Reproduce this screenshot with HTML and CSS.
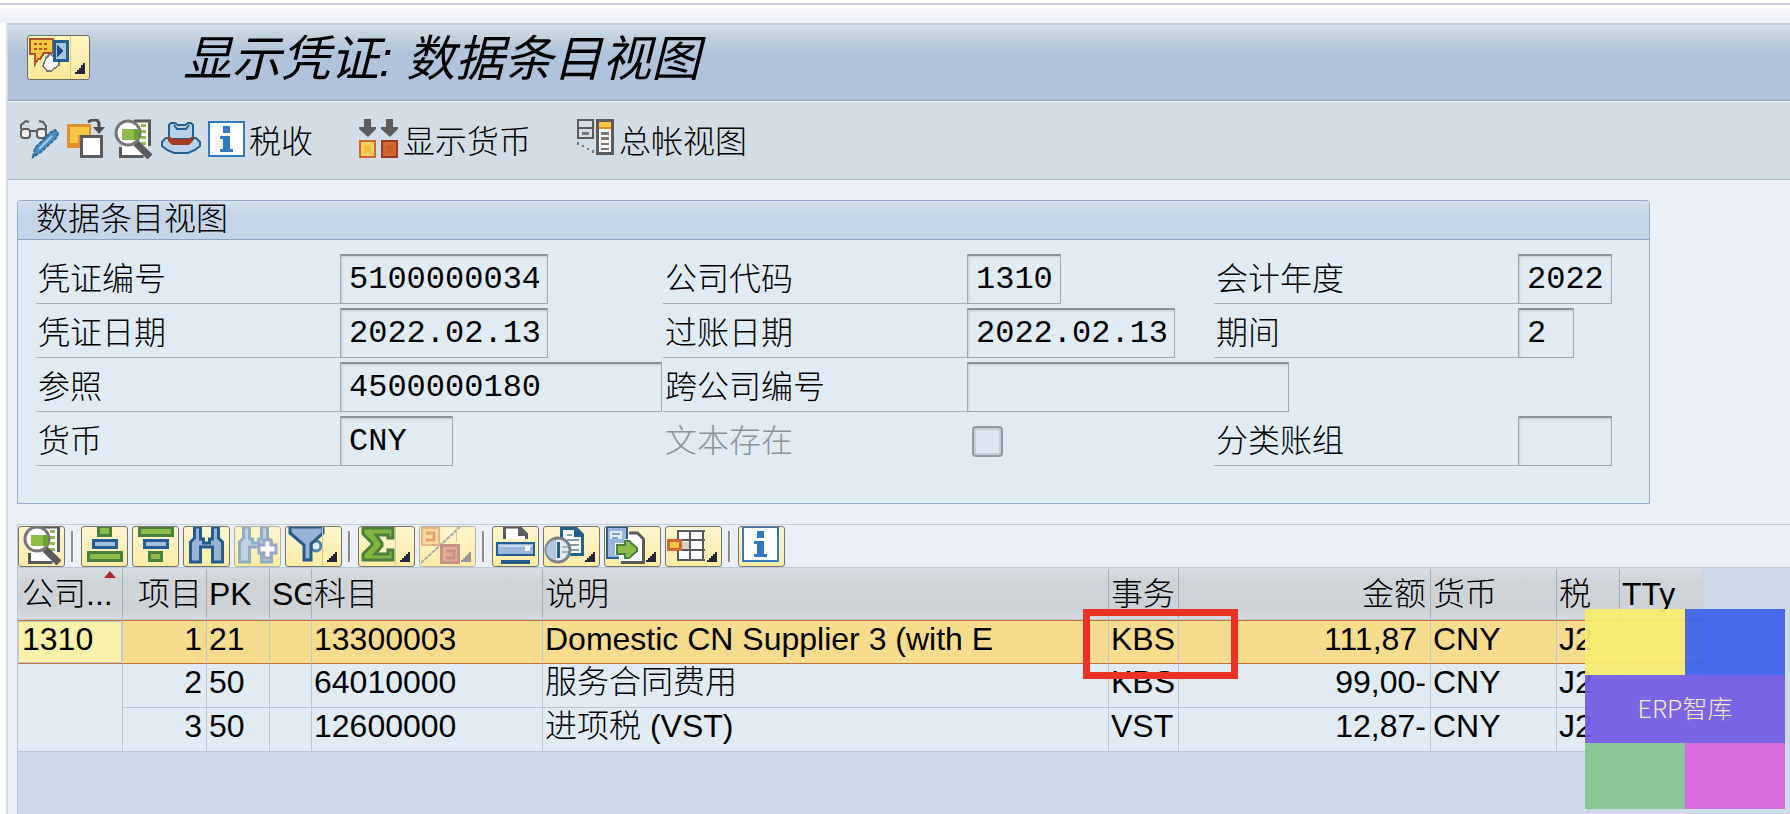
FILE: index.html
```html
<!DOCTYPE html>
<html lang="zh-CN">
<head>
    <meta charset="UTF-8">
    <meta name="viewport" content="width=device-width, initial-scale=1.0">
    <title>显示凭证: 数据条目视图</title>
    <link rel="stylesheet" href="styles.css">
</head>
<body>
    <!-- shared icons -->
    <svg class="defs" width="0" height="0">
        <symbol id="i-detail" viewBox="0 0 38 40">
            <path fill="#fff" stroke="#5a5a5a" stroke-width="3" d="M20 2h15.500v25M6.500 28v9.500h23"/>
            <path fill="#fff" d="M8 4h26v32H8z"/>
            <path fill="#8fbc45" d="M27 5h5v3h-5zM27 11h5v3h-5zM27 17h5v3h-5zM27 23h5v3h-5z"/>
            <path stroke="#5a5a5a" stroke-width="7" d="M22 24L36 38"/>
            <circle cx="14" cy="14" r="12" fill="#fff" stroke="#777" stroke-width="3"/>
            <path fill="#8fbc45" d="M8 10h17v11H8z"/>
            <path fill="#6da036" d="M20 10h5v11h-5z"/>
        </symbol>
        <symbol id="i-info" viewBox="0 0 37 36">
            <path fill="#fff" stroke="#3279bd" stroke-width="2" d="M1 1h35v34H1z"/>
            <path fill="#3279bd" d="M15 5h7v7h-7zM12 15h10v13h3v3H12v-3h3V18h-3z"/>
        </symbol>
    </svg>

    <div class="top-strip"></div>
    <div class="window">
        <header class="title-bar">
            <button type="button" class="btn-services" aria-label="服务">
                <svg viewBox="1 1 61 43" width="61" height="43" shape-rendering="crispEdges">
                    <path fill="#fff" stroke="#777" stroke-width="1.500" d="M19 23l4-4 9 7v4l-8 6h-4l-4-5z"/>
                    <path fill="#f6c944" stroke="#b9502a" stroke-width="2" d="M3 4h23v14h-9l-4 6h-2l-3 5V19H3z"/>
                    <path stroke="#b9502a" stroke-width="2" stroke-dasharray="3 2" d="M7 9h14M7 14h14"/>
                    <path fill="#a9c3df" stroke="#245f92" stroke-width="3" d="M27 6h13v19H27z"/>
                    <path fill="#174f80" d="M30 10l7 6-7 6z"/>
                    <path fill="#d8cb8c" d="M43 1h1v43h-1z"/>
                    <path fill="#26253a" d="M58 28v11H48v-2h2v-2h2v-2h2v-3h2v-2z"/>
                </svg>
            </button>
            <h1>显示凭证: 数据条目视图</h1>
        </header>

        <nav class="app-bar">
            <button type="button" class="tool" aria-label="显示/更改">
                <svg viewBox="0 0 40 40" width="40" height="40">
                    <g fill="none" stroke="#5c5c5c" stroke-width="2">
                        <path d="M1 10V6l5-4 3 1M19 2l4 1 3 4v4"/>
                        <rect x="1" y="10" width="9" height="9" rx="3" fill="#f4f4f4"/>
                        <rect x="17" y="10" width="9" height="9" rx="3" fill="#f4f4f4"/>
                        <path d="M10 12h7"/>
                    </g>
                    <path fill="#4f8fbf" stroke="#2c6a9c" stroke-width="2" stroke-dasharray="4 1" d="M13 38l2-9 16-16 4-2 3 3-1 4-16 15z"/>
                    <path stroke="#a7c6df" stroke-width="2" d="M19 30l13-13"/>
                </svg>
            </button>
            <button type="button" class="tool" aria-label="其他凭证">
                <svg viewBox="0 0 40 40" width="40" height="40">
                    <path fill="#e38e2c" d="M0 5h24v24H0z"/>
                    <path fill="#f6c944" d="M3 8h19v8H11v8H3z"/>
                    <path fill="#fff" stroke="#5c5c5c" stroke-width="3" d="M14.500 17.500h20v20h-20z"/>
                    <path fill="none" stroke="#4d4d4d" stroke-width="3" d="M21 3l4-2h5l2 3v7"/>
                    <path fill="#4d4d4d" d="M26 8h12l-6 7z"/>
                </svg>
            </button>
            <button type="button" class="tool" aria-label="明细">
                <svg width="38" height="40"><use href="#i-detail"/></svg>
            </button>
            <button type="button" class="tool" aria-label="凭证抬头">
                <svg viewBox="0 0 40 40" width="40" height="40">
                    <path fill="#b9d0e8" stroke="#245f92" stroke-width="2" d="M8 19H5l-4 4v4l5 4 7 3h14l7-3 5-4v-4l-4-4z"/>
                    <path fill="#b9d0e8" stroke="#245f92" stroke-width="2" d="M8 20V6l2-2h4l3 2h7l3-2h3l2 2v14z"/>
                    <path fill="none" stroke="#245f92" stroke-width="2" d="M13 6l3 4h9l3-4"/>
                    <path fill="#a43a20" d="M7 17l6 3h14l5-3v5l-4 4H11l-4-4z"/>
                </svg>
            </button>
            <button type="button" class="tool wide">
                <svg width="37" height="36"><use href="#i-info"/></svg>
                <span>税收</span>
            </button>
            <button type="button" class="tool wide">
                <svg viewBox="0 0 40 40" width="40" height="40">
                    <path fill="#5c5c5c" d="M5 0h7v8h5v2l-8 8-9-8V8h5zM27 0h7v8h5v2l-8 8-9-8V8h5z"/>
                    <path fill="#f8d162" stroke="#d3692e" stroke-width="2" d="M1 22h15v16H1z"/>
                    <path fill="#f3c23a" d="M5 26h7v8H5z"/>
                    <path fill="#cf6a38" stroke="#a23720" stroke-width="2" d="M23 22h15v16H23z"/>
                    <path fill="#d25a24" d="M27 26h7v8h-7z"/>
                </svg>
                <span>显示货币</span>
            </button>
            <button type="button" class="tool wide">
                <svg viewBox="0 0 38 40" width="38" height="40" shape-rendering="crispEdges">
                    <path fill="#d8dde4" stroke="#5c5c5c" stroke-width="2" d="M1 1h15v18H1zM1 9h15"/>
                    <path fill="#777" d="M5 13h7v3H5zM0 23h2v3H0zM5 26h2v2H5zM10 29h2v2h-2zM15 31h2v3h-2z"/>
                    <path fill="#fff" stroke="#5c5c5c" stroke-width="3" d="M20.500 1.500h15v33h-15z"/>
                    <path fill="#f6c944" d="M22 3h12v5H22z"/>
                    <path fill="#e38e2c" d="M22 8h12v2H22z"/>
                    <path fill="#777" d="M24 13h8v3h-8zM24 18h8v3h-8zM24 24h8v2h-8zM24 29h8v2h-8z"/>
                </svg>
                <span>总帐视图</span>
            </button>
        </nav>

        <main class="content">
            <section class="panel">
                <h2>数据条目视图</h2>
                <form class="fields">
                    <div class="field">
                        <label for="docNo">凭证编号</label>
                        <input type="text" id="docNo" class="w10" value="5100000034" readonly>
                    </div>
                    <div class="field">
                        <label for="company">公司代码</label>
                        <input type="text" id="company" class="w4" value="1310" readonly>
                    </div>
                    <div class="field">
                        <label for="year">会计年度</label>
                        <input type="text" id="year" class="w4" value="2022" readonly>
                    </div>

                    <div class="field">
                        <label for="docDate">凭证日期</label>
                        <input type="text" id="docDate" class="w10" value="2022.02.13" readonly>
                    </div>
                    <div class="field">
                        <label for="postDate">过账日期</label>
                        <input type="text" id="postDate" class="w10" value="2022.02.13" readonly>
                    </div>
                    <div class="field">
                        <label for="period">期间</label>
                        <input type="text" id="period" class="w2" value="2" readonly>
                    </div>

                    <div class="field">
                        <label for="reference">参照</label>
                        <input type="text" id="reference" class="w16" value="4500000180" readonly>
                    </div>
                    <div class="field field-last">
                        <label for="crossNo">跨公司编号</label>
                        <input type="text" id="crossNo" class="w16" value="" readonly>
                    </div>

                    <div class="field">
                        <label for="currency">货币</label>
                        <input type="text" id="currency" class="w5" value="CNY" readonly>
                    </div>
                    <div class="field disabled">
                        <label for="texts">文本存在</label>
                        <input type="checkbox" id="texts" disabled>
                    </div>
                    <div class="field">
                        <label for="ledger">分类账组</label>
                        <input type="text" id="ledger" class="w4" value="" readonly>
                    </div>
                </form>
            </section>

            <section class="alv">
                <div class="alv-bar">
                    <button type="button" aria-label="明细">
                        <svg viewBox="1 1 45 39" width="45" height="39"><use href="#i-detail" x="5" y="-1" width="38" height="40"/></svg>
                    </button>
                    <span class="sep"></span>
                    <button type="button" aria-label="升序排序">
                        <svg viewBox="1 1 45 39" width="45" height="39" shape-rendering="crispEdges" stroke-width="3">
                            <path fill="#8fbc49" stroke="#47803f" d="M17.500 0h12v9.500h-12zM7.500 26.500h33v8h-33z"/>
                            <path fill="#a5bedd" stroke="#245f92" d="M12.500 14.500h23v7h-23z"/>
                        </svg>
                    </button>
                    <button type="button" aria-label="降序排序">
                        <svg viewBox="1 1 45 39" width="45" height="39" shape-rendering="crispEdges" stroke-width="3">
                            <path fill="#8fbc49" stroke="#47803f" d="M7.500 1.500h33v8h-33zM17.500 26.500h12v8h-12z"/>
                            <path fill="#a5bedd" stroke="#245f92" d="M12.500 14.500h23v7h-23z"/>
                        </svg>
                    </button>
                    <button type="button" aria-label="查找">
                        <svg viewBox="1 1 45 39" width="45" height="39">
                            <path fill="#97b3d6" stroke="#245b8c" stroke-width="3" d="M7.500 36V16l4-4V1h6v12h3v4h6v-4h3V1h6v11l4 4v20h-10V21h-12v15z"/>
                        </svg>
                    </button>
                    <button type="button" class="off" aria-label="继续查找" disabled>
                        <svg viewBox="1 1 45 39" width="45" height="39">
                            <path fill="#c3d0e0" stroke="#8fadc4" stroke-width="3" d="M5.500 36V16l4-4V1h6v12h3v4h6v-4h3V1h6v11l4 4v20h-10V21h-12v15z"/>
                            <path fill="#fff" stroke="#98a5c8" stroke-width="3" d="M30 14h7v5h5v8h-5v5h-7v-5h-5v-8h5z"/>
                        </svg>
                    </button>
                    <button type="button" aria-label="过滤器">
                        <svg viewBox="1 1 55 39" width="55" height="39">
                            <circle cx="31" cy="20" r="5" fill="#dfe8f0" stroke="#4d81b0" stroke-width="3"/>
                            <path fill="#97b3d6" stroke="#245b8c" stroke-width="3" d="M5 1h33v6L26 18v16h-7V19L5 7z"/>
                            <path class="split" d="M37 1h1v39h-1z"/>
                            <path class="corner" d="M52 26v10H42v-2h2v-2h2v-2h2v-2h2v-2z"/>
                        </svg>
                    </button>
                    <span class="sep"></span>
                    <button type="button" aria-label="总计">
                        <svg viewBox="1 1 55 39" width="55" height="39">
                            <path fill="#86b440" stroke="#47803f" stroke-width="3" d="M5 2h30v10h-5V9H18l6 8v3l-7 8h13v-4h5v10H5v-6l9-9v-2L5 8z"/>
                            <path class="split" d="M37 1h1v39h-1z"/>
                            <path class="corner" d="M52 26v10H42v-2h2v-2h2v-2h2v-2h2v-2z"/>
                        </svg>
                    </button>
                    <button type="button" class="off" aria-label="小计" disabled>
                        <svg viewBox="1 1 55 39" width="55" height="39">
                            <path fill="#f6dc9c" stroke="#e8b487" stroke-width="2" d="M3 2h17v17H3z"/>
                            <path fill="none" stroke="#dfa17c" stroke-width="3" d="M7 7h8v7H7"/>
                            <path stroke="#a9a9a9" stroke-width="2" stroke-dasharray="4 1" d="M2 37L41 1"/>
                            <path fill="#dfae93" stroke="#c69285" stroke-width="3" d="M22.500 19.500h17v17h-17z"/>
                            <path fill="none" stroke="#c69285" stroke-width="3" d="M27 25h8v7h-8"/>
                            <path class="split" d="M37 1h1v15h-1z"/>
                            <path class="corner" d="M52 26v10H42v-2h2v-2h2v-2h2v-2h2v-2z"/>
                        </svg>
                    </button>
                    <span class="sep"></span>
                    <button type="button" aria-label="打印">
                        <svg viewBox="1 1 45 39" width="45" height="39">
                            <path fill="#fff" stroke="#5a5a5a" stroke-width="3" d="M12.500 13V1h15l7 7v5"/>
                            <path fill="#5a5a5a" d="M26 1l9 9h-9z"/>
                            <path fill="#9ab6d8" stroke="#245f92" stroke-width="2" d="M5 17h37v12H5z"/>
                            <path fill="#c9daea" d="M7 19h33v2H7z"/>
                            <path fill="#fff" d="M33 20h5v5h-5z"/>
                            <path fill="#245b8c" d="M9 34h29v4H9z"/>
                        </svg>
                    </button>
                    <button type="button" aria-label="视图">
                        <svg viewBox="1 1 55 39" width="55" height="39">
                            <path fill="#fff" stroke="#245f92" stroke-width="3" d="M18.500 2.500h15l6 6v20h-21z"/>
                            <path fill="#245f92" d="M31 1l10 10H31z"/>
                            <path stroke="#7f9fb5" stroke-width="2" d="M24 9h5M24 14h12M24 19h12M24 24h12"/>
                            <circle cx="15" cy="24" r="12" fill="#e4ebef" stroke="#7d8287" stroke-width="3"/>
                            <path fill="#b0c8e0" d="M13 14v20A10 10 0 0 1 13 14z"/>
                            <path fill="#245f92" d="M14 16h3v16h-3z"/>
                            <path stroke="#9fb6c6" stroke-width="2" d="M19 21h6M19 26h6"/>
                            <path class="corner" d="M52 26v10H42v-2h2v-2h2v-2h2v-2h2v-2z"/>
                        </svg>
                    </button>
                    <button type="button" aria-label="导出">
                        <svg viewBox="1 1 55 39" width="55" height="39">
                            <path fill="#fff" stroke="#5a5a5a" stroke-width="3" d="M17 36.500h22.500V13l-6-6H25"/>
                            <path fill="#fff" d="M18 9h15l5 5v21H18z"/>
                            <path fill="#9ab6d8" stroke="#245f92" stroke-width="2" d="M3 1h20v31H3z"/>
                            <path fill="#e3ecf5" d="M6 5h12v8H6z"/>
                            <path stroke="#7fa0c8" stroke-width="2" d="M8 8h8M8 12h6"/>
                            <path fill="#fff" d="M11 17h9v-4l15 0v22H15v-6h-4z"/>
                            <path fill="#8fbc49" stroke="#47803f" stroke-width="2" d="M13 19h8v-4h4l8 7v3l-8 7h-4v-4h-8z"/>
                            <path class="corner" d="M52 26v10H42v-2h2v-2h2v-2h2v-2h2v-2z"/>
                        </svg>
                    </button>
                    <button type="button" aria-label="布局">
                        <svg viewBox="1 1 55 39" width="55" height="39" shape-rendering="crispEdges">
                            <path fill="#fff" d="M12 3h27v31H12z"/>
                            <path fill="none" stroke="#5a5a5a" stroke-width="2" d="M12 5h28M12 14h28M12 24h28M12 34h28M13 4v30M25 4v30M38 4v30"/>
                            <path fill="#d4cfc0" d="M16 16h8v7h-8z"/>
                            <path fill="#f6c944" stroke="#cf6a38" stroke-width="3" d="M3.500 14.500h12v9h-12z"/>
                            <path class="corner" d="M52 26v10H42v-2h2v-2h2v-2h2v-2h2v-2z"/>
                        </svg>
                    </button>
                    <span class="sep"></span>
                    <button type="button" aria-label="信息">
                        <svg viewBox="1 1 45 39" width="45" height="39"><use href="#i-info" x="4" y="0" width="37" height="36"/></svg>
                    </button>
                </div>

                <div class="grid">
                    <table>
                        <colgroup>
                            <col class="c-company"><col class="c-item"><col class="c-pk"><col class="c-sg">
                            <col class="c-account"><col class="c-text"><col class="c-trans"><col class="c-amount">
                            <col class="c-curr"><col class="c-tax"><col class="c-tty">
                        </colgroup>
                        <thead>
                            <tr>
                                <th class="sorted">公司...</th>
                                <th class="num">项目</th>
                                <th>PK</th>
                                <th>SG</th>
                                <th>科目</th>
                                <th>说明</th>
                                <th>事务</th>
                                <th class="num">金额</th>
                                <th>货币</th>
                                <th>税</th>
                                <th>TTy</th>
                            </tr>
                        </thead>
                        <tbody>
                            <tr class="selected">
                                <td class="key">1310</td>
                                <td class="num">1</td>
                                <td>21</td>
                                <td></td>
                                <td>13300003</td>
                                <td>Domestic CN Supplier 3 (with E</td>
                                <td>KBS</td>
                                <td class="num">111,87&nbsp;</td>
                                <td>CNY</td>
                                <td>J2</td>
                                <td></td>
                            </tr>
                            <tr>
                                <td rowspan="2"></td>
                                <td class="num">2</td>
                                <td>50</td>
                                <td></td>
                                <td>64010000</td>
                                <td>服务合同费用</td>
                                <td>KBS</td>
                                <td class="num">99,00-</td>
                                <td>CNY</td>
                                <td>J2</td>
                                <td></td>
                            </tr>
                            <tr>
                                <td class="num">3</td>
                                <td>50</td>
                                <td></td>
                                <td>12600000</td>
                                <td>进项税 (VST)</td>
                                <td>VST</td>
                                <td class="num">12,87-</td>
                                <td>CNY</td>
                                <td>J2</td>
                                <td></td>
                            </tr>
                        </tbody>
                    </table>
                    <div class="marker"></div>
                </div>
            </section>
        </main>
    </div>

    <div class="watermark">
        <i class="yellow"></i><i class="blue"></i>
        <span>ERP智库</span>
        <i class="green"></i><i class="pink"></i>
    </div>
</body>
</html>
```

FILE: styles.css
```css
* {
    box-sizing: border-box;
}
body {
    margin: 0;
    min-height: 100vh;
    display: flex;
    flex-direction: column;
    font-family: "Liberation Sans", "Noto Sans CJK SC", sans-serif;
    font-size: 32px;
    font-weight: 300;
    color: #000;
    background: #fff;
    overflow: hidden;
}
h1, h2 {
    margin: 0;
}
button {
    font: inherit;
    color: inherit;
    padding: 0;
    cursor: pointer;
}
svg {
    display: block;
    fill: none;
    flex: none;
}
.defs {
    position: absolute;
}

/* window frame */
.top-strip {
    height: 20px;
    margin-top: 3px;
    border-top: 2px solid #c9cfdd;
    background: linear-gradient(#fff 3px, #f6f7fb 4px, #eceff5);
}
.window {
    flex: 1;
    display: flex;
    flex-direction: column;
    margin-left: 6px;
    border-left: 2px solid #d6dce8;
    background: #ebf0f8;
}
.title-bar {
    display: flex;
    align-items: flex-start;
    height: 78px;
    padding: 10px 0 0 19px;
    border-top: 2px solid #c3ccd8;
    border-bottom: 1px solid #96a8bf;
    background: linear-gradient(#d5e0ea, #c3d1dc 12px, #b0c3da 28px, #b0c3da);
}
.btn-services {
    width: 63px;
    height: 45px;
    border: 1px solid #6c6c66;
    border-radius: 3px;
    background: linear-gradient(#fdf4c0, #fae99a);
}
.title-bar h1 {
    margin-left: 93px;
    font-size: 49px;
    line-height: 48px;
    font-weight: 400;
    font-style: italic;
    white-space: nowrap;
}
.app-bar {
    display: flex;
    align-items: center;
    height: 79px;
    padding: 0 0 4px 12px;
    border-top: 1px solid #f4f7fa;
    border-bottom: 1px solid #a5b4c4;
    background: #d3dde6;
}
.tool {
    display: flex;
    align-items: center;
    width: 47px;
    height: 48px;
    border: 0;
    background: none;
    white-space: nowrap;
}
.tool.wide {
    width: auto;
    gap: 4px;
    margin-right: 46px;
}

/* document header */
.content {
    flex: 1;
    display: flex;
    flex-direction: column;
    padding: 20px 0 0 9px;
}
.panel {
    max-width: 1633px;
    border: 1px solid #94acc9;
    border-radius: 3px 3px 0 0;
    background: #e0ebf4;
}
.panel h2 {
    height: 39px;
    padding-left: 18px;
    border-bottom: 1px solid #8ba4c4;
    background: linear-gradient(#d3dfeb, #c5d5e7 14px);
    font-size: 32px;
    line-height: 36px;
    font-weight: 300;
}
.fields {
    display: grid;
    grid-template-columns: 627px 551px 1fr;
    row-gap: 4px;
    padding: 14px 0 37px 18px;
}
.field {
    display: flex;
    height: 50px;
}
.field-last {
    grid-column: 2 / 4;
}
.field label {
    width: 304px;
    padding-left: 2px;
    border-bottom: 1px solid #aab1b8;
    line-height: 50px;
}
.field input[type="text"] {
    padding: 0 8px;
    border: 1px solid #a3a7aa;
    border-top: 2px solid #8e9396;
    border-radius: 1px;
    background: #e0ebf4;
    box-shadow: inset 1px 1px 2px #c3ccd4;
    font-family: "Liberation Mono", monospace;
    font-size: 32px;
    color: #000;
    outline: none;
}
.field .w2 {
    width: 56px;
}
.field .w4 {
    width: 94px;
}
.field .w5 {
    width: 113px;
}
.field .w10 {
    width: 208px;
}
.field .w16 {
    width: 322px;
}
.field.disabled label {
    border-bottom-color: transparent;
    color: #8e9297;
}
.field input[type="checkbox"] {
    appearance: none;
    align-self: center;
    width: 31px;
    height: 31px;
    margin: 0 5px;
    border: 2px solid #97999c;
    border-radius: 4px;
    background: #dde6f0;
    box-shadow: inset 0 0 0 2px #c6cedb;
}

/* line items */
.alv {
    flex: 1;
    display: flex;
    flex-direction: column;
    margin-top: 20px;
    border-top: 1px solid #c3cedc;
    border-left: 1px solid #b9c6d6;
}
.alv-bar {
    display: flex;
    gap: 4px;
    padding-top: 1px;
}
.alv-bar button {
    height: 41px;
    border: 1px solid #77756a;
    border-radius: 3px;
    background: linear-gradient(#fdf5cf, #fbeda6);
    overflow: hidden;
}
.alv-bar .off {
    border-color: #b5b2a2;
}
.sep {
    width: 3px;
    height: 31px;
    margin: 5px 3px 0 2px;
    border-left: 2px solid #8d8d8d;
    border-right: 1px solid #fff;
}
.corner {
    fill: #26253a;
}
.off .corner {
    fill: #98969a;
}
.split {
    fill: #d8cb8c;
}
.grid {
    position: relative;
    flex: 1;
    border-top: 1px solid #b9c7d6;
    padding-top: 1px;
    background: #cddbe8;
}
table {
    width: 1686px;
    table-layout: fixed;
    border-collapse: separate;
    border-spacing: 0;
}
.c-company { width: 105px; }
.c-item { width: 84px; }
.c-pk { width: 63px; }
.c-sg { width: 42px; }
.c-account { width: 231px; }
.c-text { width: 566px; }
.c-trans { width: 70px; }
.c-amount { width: 252px; }
.c-curr { width: 126px; }
.c-tax { width: 63px; }
.c-tty { width: 84px; }
th, td {
    padding: 0 4px 0 2px;
    border-right: 1px solid #bcc7d4;
    border-bottom: 1px solid #bcc7d4;
    text-align: left;
    white-space: nowrap;
    overflow: hidden;
}
th {
    height: 51px;
    border-right-color: #a6adb8;
    background: linear-gradient(#d9dde1, #cfd4d9 12px, #cdd2d7 40px, #d6dade);
    font-weight: 300;
    line-height: 48px;
}
th:last-child {
    border-right-color: #cdd2d7;
}
td {
    height: 44px;
    background: #e0ebf4;
    line-height: 36px;
    vertical-align: top;
}
th:first-child, td:first-child {
    padding-left: 4px;
}
.num {
    text-align: right;
}
.sorted {
    position: relative;
}
.sorted::after {
    content: "";
    position: absolute;
    top: 2px;
    right: 6px;
    border: 6px solid transparent;
    border-top: 0;
    border-bottom: 7px solid #bb2430;
}
.selected td {
    border-top: 1px solid #c8703a;
    border-bottom-color: #c8703a;
    background: #f7dc8d;
}
.selected .key {
    background: #faf1a8;
    box-shadow: inset 0 0 0 1px #c3cbd2;
}

/* highlight round the transaction key */
.marker {
    position: absolute;
    left: 1065px;
    top: 41px;
    width: 155px;
    height: 70px;
    border: 7px solid #ea3323;
}

.watermark {
    position: absolute;
    right: 5px;
    bottom: 5px;
    display: grid;
    grid-template-columns: 100px 100px;
    grid-template-rows: 66px 68px 66px;
    opacity: 0.93;
}
.watermark span {
    grid-column: 1 / 3;
    background: #735be6;
    color: #f6ebcb;
    font-family: "Noto Sans CJK SC", sans-serif;
    font-size: 25px;
    line-height: 64px;
    text-align: center;
}
.yellow { background: #f8ed70; }
.blue { background: #3f62ed; }
.green { background: #87c493; }
.pink { background: #d765da; }
```
